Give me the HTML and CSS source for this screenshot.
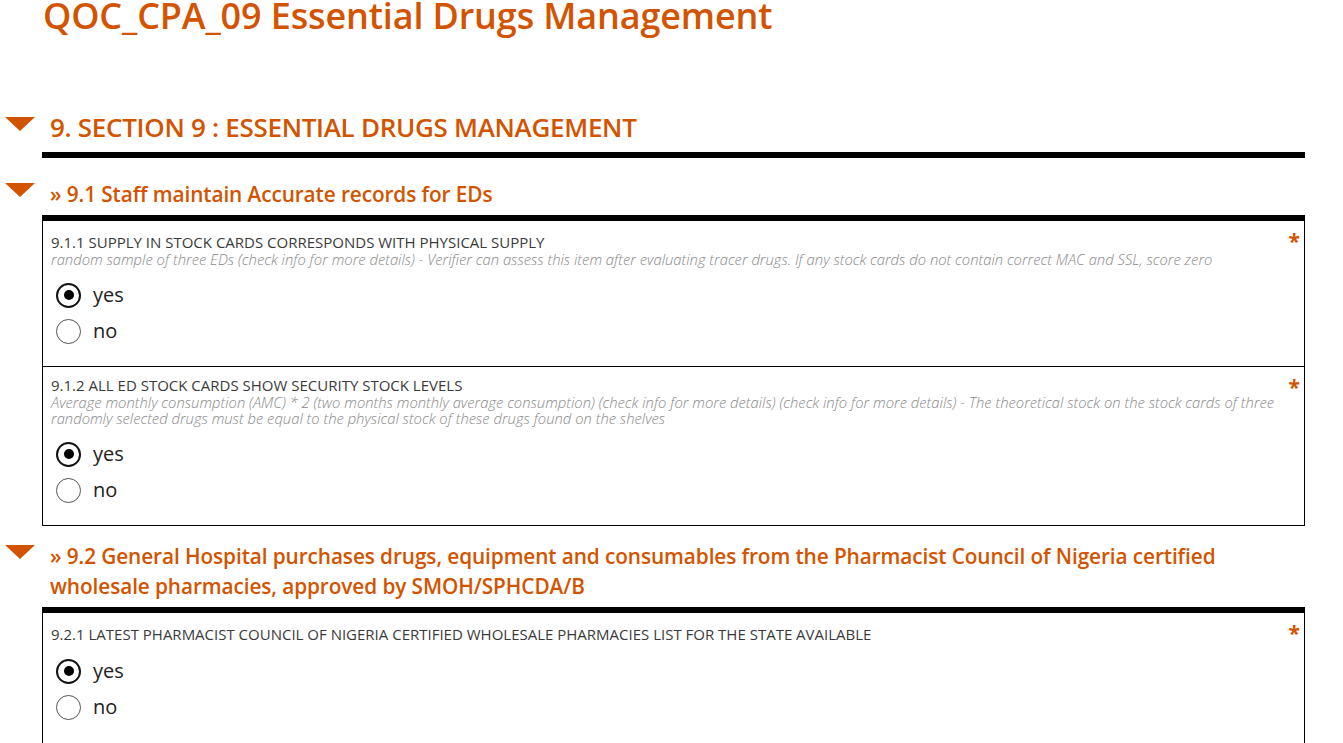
FILE: index.html
```html
<!DOCTYPE html>
<html lang="en">
<head>
<meta charset="utf-8">
<title>QOC_CPA_09 Essential Drugs Management</title>
<link rel="stylesheet" href="styles.css">
</head>
<body>
<main class="page">
  <h1 class="page-title">QOC_CPA_09 Essential Drugs Management</h1>

  <section class="section">
    <header class="group-head level-1">
      <span class="caret"></span>
      <h2 class="group-title">9. SECTION 9 : ESSENTIAL DRUGS MANAGEMENT</h2>
    </header>
    <div class="section-rule"></div>

    <section class="group">
      <header class="group-head level-2">
        <span class="caret"></span>
        <h3 class="group-title">» 9.1 Staff maintain Accurate records for EDs</h3>
      </header>
      <div class="box">
        <div class="item">
          <span class="required">*</span>
          <div class="q-label">9.1.1 SUPPLY IN STOCK CARDS CORRESPONDS WITH PHYSICAL SUPPLY</div>
          <div class="q-hint">random sample of three EDs (check info for more details) - Verifier can assess this item after evaluating tracer drugs. If any stock cards do not contain correct MAC and SSL, score zero</div>
          <div class="options">
            <label class="option"><span class="radio checked"></span><span class="opt-text">yes</span></label>
            <label class="option"><span class="radio"></span><span class="opt-text">no</span></label>
          </div>
        </div>
        <div class="item">
          <span class="required">*</span>
          <div class="q-label">9.1.2 ALL ED STOCK CARDS SHOW SECURITY STOCK LEVELS</div>
          <div class="q-hint">Average monthly consumption (AMC) * 2 (two months monthly average consumption) (check info for more details) (check info for more details) - The theoretical stock on the stock cards of three randomly selected drugs must be equal to the physical stock of these drugs found on the shelves</div>
          <div class="options">
            <label class="option"><span class="radio checked"></span><span class="opt-text">yes</span></label>
            <label class="option"><span class="radio"></span><span class="opt-text">no</span></label>
          </div>
        </div>
      </div>
    </section>

    <section class="group">
      <header class="group-head level-2">
        <span class="caret"></span>
        <h3 class="group-title">» 9.2 General Hospital purchases drugs, equipment and consumables from the Pharmacist Council of Nigeria certified wholesale pharmacies, approved by SMOH/SPHCDA/B</h3>
      </header>
      <div class="box box-open">
        <div class="item">
          <span class="required">*</span>
          <div class="q-label">9.2.1 LATEST PHARMACIST COUNCIL OF NIGERIA CERTIFIED WHOLESALE PHARMACIES LIST FOR THE STATE AVAILABLE</div>
          <div class="options">
            <label class="option"><span class="radio checked"></span><span class="opt-text">yes</span></label>
            <label class="option"><span class="radio"></span><span class="opt-text">no</span></label>
          </div>
        </div>
      </div>
    </section>
  </section>
</main>
</body>
</html>
```

FILE: styles.css
```css
* { box-sizing: border-box; }

html, body {
  margin: 0;
  padding: 0;
  background: #fff;
}

body {
  font-family: "Open Sans", "Noto Sans", sans-serif;
  color: #333;
  overflow: hidden;
}

.page {
  width: 1343px;
  padding: 0 38px 0 0;
}

.page-title {
  margin: 0 0 0 43px;
  font-size: 36px;
  line-height: 32px;
  font-weight: 600;
  color: #d35400;
  letter-spacing: -0.15px;
}

.group-head {
  display: flex;
  align-items: flex-start;
}

.caret {
  flex: none;
  width: 0;
  height: 0;
  margin-left: 5px;
  margin-right: 15px;
  border-left: 15px solid transparent;
  border-right: 15px solid transparent;
  border-top: 14px solid #d35400;
}

.group-title {
  margin: 0;
  color: #d35400;
  font-weight: 600;
}

.level-1 {
  margin-top: 78px;
}

.level-1 .caret {
  margin-top: 7px;
}

.level-1 .group-title {
  font-size: 26px;
  line-height: 34px;
  letter-spacing: -0.3px;
}

.section-rule {
  margin: 8px 0 0 42px;
  height: 6px;
  background: #000;
}

.level-2 {
  margin-top: 21px;
}

.level-2 .caret {
  margin-top: 4px;
}

.level-2 .group-title {
  font-size: 20.8px;
  line-height: 30px;
  letter-spacing: -0.1px;
}

.group + .group .level-2 {
  margin-top: 15px;
}

.box {
  margin: 6px 0 0 42px;
  border: 1px solid #000;
  border-top: 6px solid #000;
}

.box-open .item {
  padding-bottom: 40px;
}

.item {
  position: relative;
  padding: 12px 8px 17px 8px;
}

.item + .item {
  border-top: 1px solid #000;
  padding-top: 9px;
}

.required {
  position: absolute;
  top: 8px;
  right: 4px;
  color: #d35400;
  font-size: 21px;
  font-weight: 700;
  line-height: 24px;
}

.q-label {
  font-size: 15px;
  line-height: 18px;
  color: #3a3a3a;
  font-weight: 400;
  letter-spacing: 0;
}

.q-hint {
  font-size: 14.8px;
  line-height: 16px;
  color: #888;
  font-style: italic;
  font-weight: 300;
  padding-right: 10px;
}

.options {
  margin-top: 10px;
  display: flex;
  flex-direction: column;
}

.option {
  display: flex;
  align-items: center;
  height: 36px;
  padding-left: 5px;
}

.radio {
  flex: none;
  width: 25px;
  height: 25px;
  border: 1px solid #555;
  border-radius: 50%;
  display: flex;
  align-items: center;
  justify-content: center;
  margin-right: 12px;
}

.radio.checked {
  border: 2px solid #111;
}

.radio.checked::after {
  content: "";
  width: 10px;
  height: 10px;
  border-radius: 50%;
  background: #000;
}

.opt-text {
  font-size: 20px;
  line-height: 24px;
  color: #222;
}
```
